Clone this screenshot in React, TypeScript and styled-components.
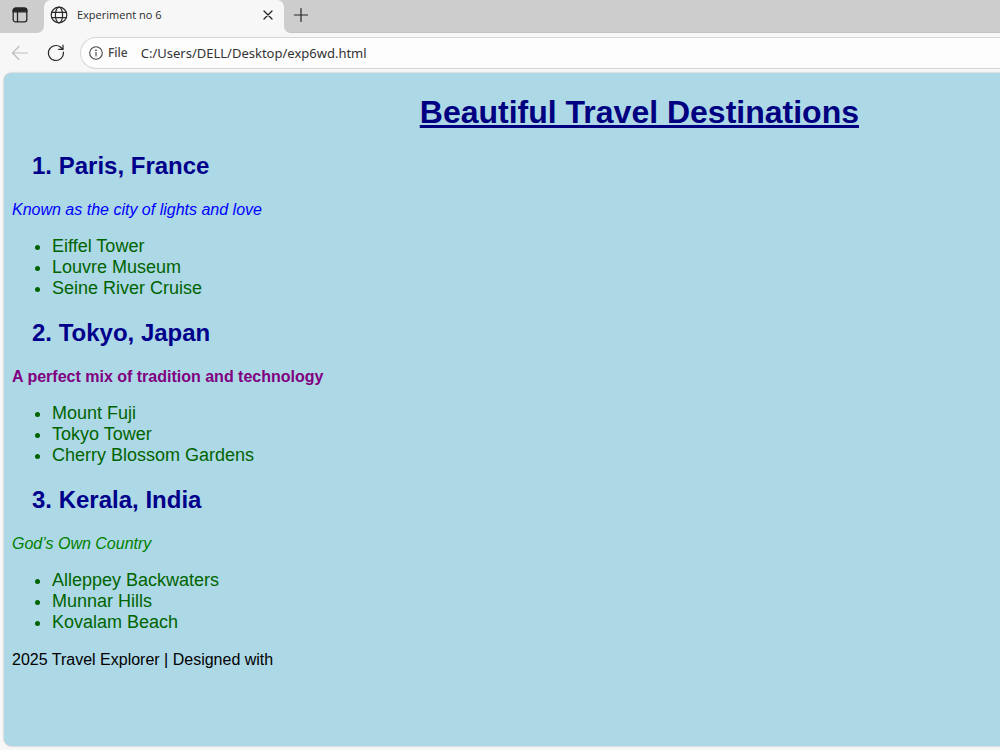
import React from "react";
import styled, { createGlobalStyle } from "styled-components";

const GlobalStyle = createGlobalStyle`
  * { box-sizing: border-box; }
  body {
    margin: 0;
    background: #f7f7f7;
    font-family: "Liberation Sans", Arial, sans-serif;
  }
`;

const Browser = styled.div`
  display: flex;
  flex-direction: column;
  min-height: 100vh;
  overflow: hidden;
  background: #f7f7f7;
`;

const TabStrip = styled.div`
  display: flex;
  height: 33px;
  background: #f7f7f7;
`;

const IconButton = styled.button<{ $width: number }>`
  display: flex;
  align-items: center;
  justify-content: center;
  flex: none;
  width: ${(p) => p.$width}px;
  height: 30px;
  padding: 0;
  border: 0;
  background: transparent;
  color: #262626;

  &:disabled { color: #bdbdbd; }
`;

const StripStart = styled.div`
  flex: none;
  width: 44px;
  padding-right: 4px;
  background: #cdcdcd;
  border-bottom-right-radius: 7px;
`;

const StripRest = styled.div`
  flex: 1;
  background: #cdcdcd;
  border-bottom: 1px solid #c4c4c4;
  border-bottom-left-radius: 7px;
`;

const TabHolder = styled.div`
  flex: none;
  width: 240px;
  background: #cdcdcd;
  height: 20px;
`;

const Tab = styled.div`
  display: flex;
  align-items: center;
  height: 33px;
  padding: 0 3px 3px 6px;
  background: #f7f7f7;
  border-radius: 7px 7px 0 0;
`;

const TabTitle = styled.button`
  display: flex;
  align-items: center;
  gap: 9px;
  flex: 1;
  padding: 0;
  border: 0;
  background: transparent;
  color: #2b2b2b;
  font: 11px/18px "Open Sans", "Noto Sans", sans-serif;
  text-align: left;
`;

const Toolbar = styled.div`
  display: flex;
  align-items: center;
  height: 40px;
  padding-left: 2px;
`;

const AddressBar = styled.div`
  display: flex;
  align-items: center;
  flex: 1;
  height: 32px;
  margin-left: 6px;
  padding-left: 8px;
  background: #fdfdfd;
  border: 1px solid #d6d6d6;
  border-right: 0;
  border-radius: 16px 0 0 16px;
`;

const SiteInfo = styled.button`
  display: flex;
  align-items: center;
  gap: 5px;
  padding: 0;
  border: 0;
  background: transparent;
  color: #444;
  font: 500 12px/18px "Noto Sans", sans-serif;
`;

const Address = styled.input`
  flex: 1;
  min-width: 0;
  margin-left: 13px;
  padding: 0;
  border: 0;
  outline: 0;
  background: transparent;
  color: #333;
  font: 13px/20px "Noto Sans", "Open Sans", sans-serif;
`;

const Page = styled.main`
  flex: 1;
  margin: 0 0 4px 4px;
  padding: 21px 0 60px 8px;
  background: #add8e6;
  border-radius: 8px 0 0 8px;
  box-shadow: 0 0 2px rgba(0, 0, 0, 0.35);
`;

const Title = styled.h1`
  margin: 0 0 22px;
  padding-left: 27%;
  color: #000080;
  font-size: 32px;
  line-height: 36px;
  text-align: center;
  text-decoration: underline;
`;

const Destinations = styled.div`
  display: flex;
  flex-direction: column;
  gap: 20px;
`;

const Place = styled.h2`
  margin: 0 0 21px;
  padding-left: 20px;
  color: #00008b;
  font-size: 24px;
  line-height: 28px;
`;

const Tagline = styled.p<{ $color: string; $bold?: boolean }>`
  margin: 0 0 17px;
  color: ${(p) => p.$color};
  font-size: 16px;
  line-height: 18px;
  font-style: ${(p) => (p.$bold ? "normal" : "italic")};
  font-weight: ${(p) => (p.$bold ? 700 : 400)};
`;

const Sights = styled.ul`
  margin: 0;
  padding-left: 40px;
  color: #006400;
  font-size: 18px;
  line-height: 21px;
`;

const Footer = styled.footer`
  margin-top: 18px;
  color: #000;
  font-size: 16px;
  line-height: 18px;
`;

const destinations = [
  {
    name: "1. Paris, France",
    tagline: "Known as the city of lights and love",
    color: "#0000ff",
    sights: ["Eiffel Tower", "Louvre Museum", "Seine River Cruise"],
  },
  {
    name: "2. Tokyo, Japan",
    tagline: "A perfect mix of tradition and technology",
    color: "#800080",
    bold: true,
    sights: ["Mount Fuji", "Tokyo Tower", "Cherry Blossom Gardens"],
  },
  {
    name: "3. Kerala, India",
    tagline: "God’s Own Country",
    color: "#008000",
    sights: ["Alleppey Backwaters", "Munnar Hills", "Kovalam Beach"],
  },
];

const line = { fill: "none", stroke: "currentColor", strokeLinecap: "round" as const, strokeLinejoin: "round" as const };

const TabsIcon = () => (
  <svg width="16" height="16" viewBox="0 0 16 16" {...line} strokeWidth="1.3">
    <rect x="1.2" y="1.2" width="13.6" height="13.6" rx="2.4" />
    <path d="M1.2 4.8V3.6a2.4 2.4 0 0 1 2.4-2.4h8.8a2.4 2.4 0 0 1 2.4 2.4v1.2z" fill="currentColor" />
    <path d="M5.5 5v9.5" />
  </svg>
);

const GlobeIcon = () => (
  <svg width="18" height="18" viewBox="0 0 18 18" {...line} strokeWidth="1.2">
    <circle cx="9" cy="9" r="7.8" />
    <ellipse cx="9" cy="9" rx="3.6" ry="7.8" />
    <path d="M1.8 6.3h14.4M1.8 11.7h14.4" />
  </svg>
);

const CloseIcon = () => (
  <svg width="10" height="10" viewBox="0 0 10 10" {...line} strokeWidth="1.3">
    <path d="M1 1l8 8M9 1L1 9" />
  </svg>
);

const PlusIcon = () => (
  <svg width="16" height="16" viewBox="0 0 16 16" {...line} strokeWidth="1.2">
    <path d="M8 1.5v13M1.5 8h13" />
  </svg>
);

const BackIcon = () => (
  <svg width="18" height="16" viewBox="0 0 18 16" {...line} strokeWidth="1.2">
    <path d="M16.5 8H1.5M8 1.5L1.5 8 8 14.5" />
  </svg>
);

const ReloadIcon = () => (
  <svg width="18" height="18" viewBox="0 0 18 18" {...line} strokeWidth="1.2">
    <path d="M16.4 8.200A7.500 7.500 0 1 1 13.500 3.050L15.800 5.200" />
    <path d="M16 1.200v4.200h-4.200" />
  </svg>
);

const InfoIcon = () => (
  <svg width="14" height="14" viewBox="0 0 14 14" {...line} strokeWidth="1.1">
    <circle cx="7" cy="7" r="6.3" />
    <path d="M7 6.5V10" />
    <circle cx="7" cy="4.3" r="0.35" fill="currentColor" />
  </svg>
);

export default function App() {
  return (
    <Browser>
      <GlobalStyle />
      <TabStrip>
        <StripStart>
          <IconButton $width={40} aria-label="Tab actions"><TabsIcon /></IconButton>
        </StripStart>
        <TabHolder>
          <Tab>
            <TabTitle><GlobeIcon />Experiment no 6</TabTitle>
            <IconButton $width={27} aria-label="Close tab"><CloseIcon /></IconButton>
          </Tab>
        </TabHolder>
        <StripRest>
          <IconButton $width={34} aria-label="New tab"><PlusIcon /></IconButton>
        </StripRest>
      </TabStrip>
      <Toolbar>
        <IconButton $width={36} aria-label="Back" disabled><BackIcon /></IconButton>
        <IconButton $width={36} aria-label="Reload"><ReloadIcon /></IconButton>
        <AddressBar>
          <SiteInfo><InfoIcon />File</SiteInfo>
          <Address aria-label="Address" defaultValue="C:/Users/DELL/Desktop/exp6wd.html" />
        </AddressBar>
      </Toolbar>
      <Page>
        <Title>Beautiful Travel Destinations</Title>
        <Destinations>
          {destinations.map((d) => (
            <section key={d.name}>
              <Place>{d.name}</Place>
              <Tagline $color={d.color} $bold={d.bold}>{d.tagline}</Tagline>
              <Sights>
                {d.sights.map((s) => <li key={s}>{s}</li>)}
              </Sights>
            </section>
          ))}
        </Destinations>
        <Footer>2025 Travel Explorer | Designed with</Footer>
      </Page>
    </Browser>
  );
}
